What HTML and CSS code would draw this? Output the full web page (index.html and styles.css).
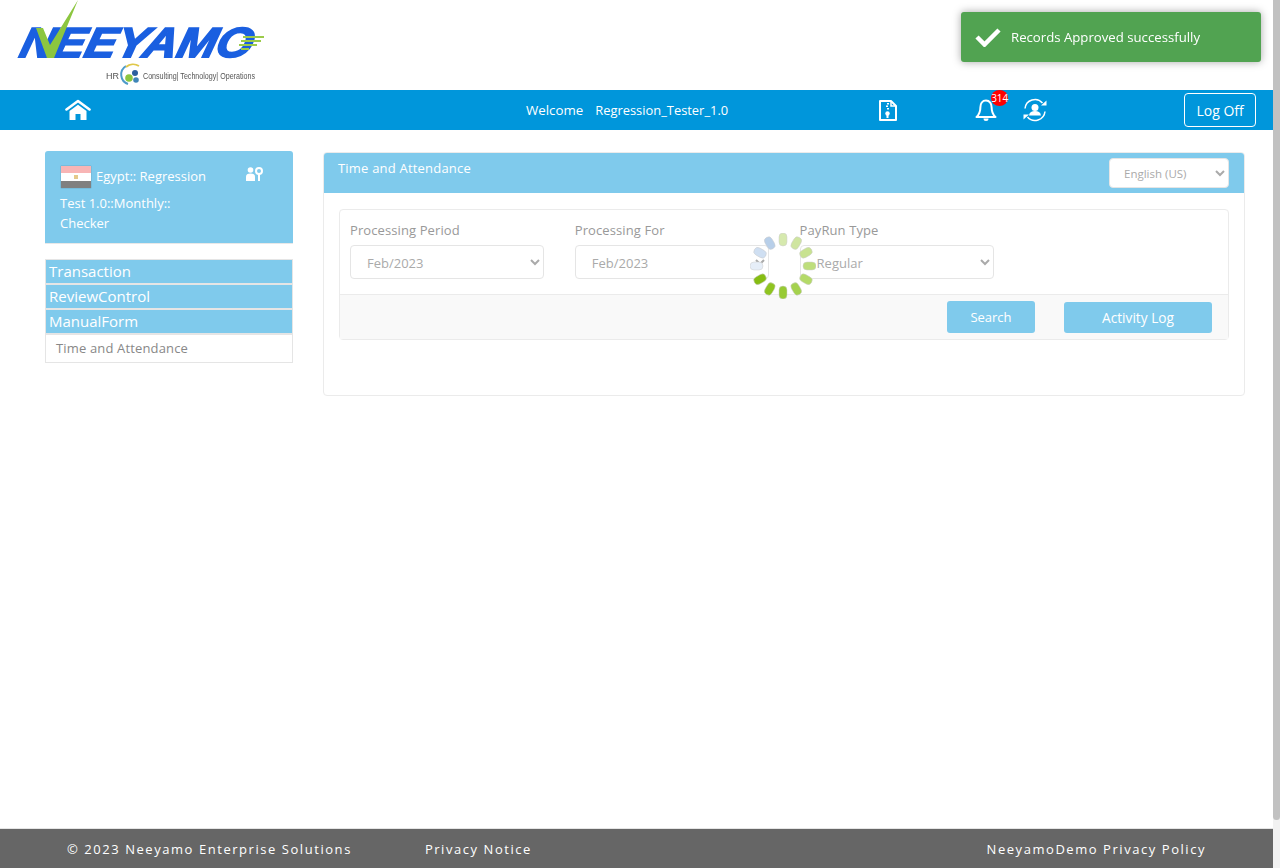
FILE: index.html
```html
<!DOCTYPE html>
<html lang="en">
<head>
  <meta charset="UTF-8">
  <meta name="viewport" content="width=device-width, initial-scale=1.0">
  <title>Time and Attendance</title>
  <link rel="stylesheet" href="styles.css">
</head>
<body>
  <div class="page">
    <!-- Logo -->
    <header class="top-header">
      <svg class="logo" width="300" height="90" viewBox="0 0 300 90">
        <text x="18" y="57" class="logo-name" textLength="232" lengthAdjust="spacingAndGlyphs" transform="skewX(-14) translate(14.200 0)">NEEYAMO</text>
        <polygon points="36,28 43,28 50,45 78,0 54,58 47,58" fill="#8cc63f"/>
        <path d="M243 37h21M241 41h20M239 45h18M241 49h8" stroke="#9ccb4a" stroke-width="2.200"/>
        <text x="106" y="79" class="logo-tag">HR</text>
        <path d="M126 66a10 10 0 0 0 2 18" stroke="#4d9bc9" stroke-width="2" fill="none"/>
        <path d="M126 67a11 11 0 0 1 13 -1" stroke="#e0c84a" stroke-width="1.800" fill="none"/>
        <circle cx="129" cy="78" r="3.800" fill="#8cc63f"/>
        <circle cx="135" cy="73" r="3" fill="#2b5f9e"/>
        <circle cx="136" cy="80" r="2.800" fill="#3f86b8"/>
        <text x="143" y="79" class="logo-tag" textLength="112" lengthAdjust="spacingAndGlyphs">Consulting| Technology| Operations</text>
      </svg>
    </header>

    <!-- Blue nav bar -->
    <nav class="nav-bar">
      <svg class="icon-home" width="26" height="22" viewBox="0 0 26 22">
        <path d="M1.500 10.500 13 2l11.500 8.500" fill="none" stroke="#fff" stroke-width="2.600" stroke-linecap="round" stroke-linejoin="round"/>
        <path d="M4.500 12 13 5.800 21.500 12v9h-6v-6h-5v6h-6z" fill="#fff"/>
      </svg>
      <span class="welcome">Welcome</span>
      <span class="username">Regression_Tester_1.0</span>
      <svg class="icon-file" width="18" height="21" viewBox="0 0 18 21">
        <path d="M1 1h11l5 5v14H1z" fill="none" stroke="#fff" stroke-width="2" stroke-linejoin="round"/>
        <path d="M12 1v5h5" fill="none" stroke="#fff" stroke-width="1.500"/>
        <path d="M8 3h2v1.500H8zM7 5.500h2V7H7zM8 8h2v1.500H8z" fill="#fff"/>
        <circle cx="8.500" cy="13.500" r="2.200" fill="#fff"/>
        <rect x="7.500" y="13.500" width="2" height="4.500" fill="#fff"/>
      </svg>
      <div class="bell-wrap">
        <svg width="24" height="24" viewBox="0 0 24 24">
          <path d="M12 2.500c-3.800 0-5.600 3.300-5.600 6.700 0 4.500-1.200 7.300-3.900 9.800h19c-2.700-2.500-3.900-5.300-3.900-9.800 0-3.400-1.800-6.700-5.600-6.700z" fill="none" stroke="#fff" stroke-width="2" stroke-linejoin="round"/>
          <path d="M9.500 20.500a2.500 2.500 0 0 0 5 0z" fill="#fff"/>
        </svg>
        <span class="badge">314</span>
      </div>
      <svg class="icon-user" width="24" height="24" viewBox="0 0 24 24">
        <path d="M2 10.500A10 10 0 0 1 19.500 5M22 13.500A10 10 0 0 1 4.500 19" fill="none" stroke="#fff" stroke-width="1.500"/>
        <path d="M18 7.500h5.500V2.500zM6 16.500H.5v5z" fill="#fff"/>
        <circle cx="12" cy="9.500" r="3.500" fill="#fff"/>
        <path d="M6 17.500c.5-3.200 2.800-4.400 6-4.400s5.500 1.200 6 4.400z" fill="#fff"/>
      </svg>
      <button class="logoff">Log Off</button>
    </nav>

    <div class="content">
      <aside class="sidebar">
        <div class="country-card">
          <div class="country-row">
            <div class="flag"><span class="flag-dot"></span></div>
            <span>Egypt:: Regression</span>
            <svg class="icon-keys" width="17" height="15" viewBox="0 0 17 15">
              <circle cx="4.500" cy="3" r="2.800" fill="#fff"/>
              <path d="M0 14V9.500C0 7.500 1.500 6.500 4.500 6.500S9 7.500 9 9.500V14z" fill="#fff"/>
              <circle cx="13" cy="4" r="3" fill="none" stroke="#fff" stroke-width="2"/>
              <path d="M12 7h2v7h-2z" fill="#fff"/>
            </svg>
          </div>
          <div class="country-line">Test 1.0::Monthly::</div>
          <div class="country-line">Checker</div>
        </div>

        <div class="menu">
          <div class="menu-head">Transaction</div>
          <div class="menu-head">ReviewControl</div>
          <div class="menu-head">ManualForm</div>
          <div class="menu-item">Time and Attendance</div>
        </div>
      </aside>

      <main class="panel">
        <div class="panel-head">
          <span class="panel-title">Time and Attendance</span>
          <select class="lang-select"><option>English (US)</option></select>
        </div>
        <div class="panel-body">
          <div class="filter-box">
            <div class="filter-row">
              <div class="field">
                <label>Processing Period</label>
                <select><option>Feb/2023</option></select>
              </div>
              <div class="field">
                <label>Processing For</label>
                <select><option>Feb/2023</option></select>
              </div>
              <div class="field">
                <label>PayRun Type</label>
                <select><option>Regular</option></select>
              </div>
            </div>
            <div class="filter-actions">
              <button class="btn btn-search">Search</button>
              <button class="btn btn-log">Activity Log</button>
            </div>
          </div>
        </div>
      </main>
    </div>

    <footer class="footer">
      <span>&copy; 2023 Neeyamo Enterprise Solutions</span>
      <span class="footer-privacy">Privacy Notice</span>
      <span class="footer-right">NeeyamoDemo Privacy Policy</span>
    </footer>
  </div>

  <!-- Fake scrollbar -->
  <div class="scrollbar"><div class="scroll-thumb"></div></div>

  <!-- Toast -->
  <div class="toast">
    <svg width="26" height="20" viewBox="0 0 26 20">
      <path d="M2 10 9.500 17.500 24 3" fill="none" stroke="#fff" stroke-width="4.500"/>
    </svg>
    <span>Records Approved successfully</span>
  </div>

  <!-- Loading spinner -->
  <svg class="spinner" width="66" height="66" viewBox="-33 -33 66 66">
    <rect x="-4" y="-33" width="8" height="13" rx="4" fill="#d6e9ae" stroke="#ccc" stroke-width=".5"/>
    <rect x="-4" y="-33" width="8" height="13" rx="4" fill="#cfe5a0" stroke="#ccc" stroke-width=".5" transform="rotate(30)"/>
    <rect x="-4" y="-33" width="8" height="13" rx="4" fill="#c8e290" stroke="#ccc" stroke-width=".5" transform="rotate(60)"/>
    <rect x="-4" y="-33" width="8" height="13" rx="4" fill="#bede7c" stroke="#ccc" stroke-width=".5" transform="rotate(90)"/>
    <rect x="-4" y="-33" width="8" height="13" rx="4" fill="#b4da68" stroke="#ccc" stroke-width=".5" transform="rotate(120)"/>
    <rect x="-4" y="-33" width="8" height="13" rx="4" fill="#a5d24e" stroke="#ccc" stroke-width=".5" transform="rotate(150)"/>
    <rect x="-4" y="-33" width="8" height="13" rx="4" fill="#97ca34" stroke="#ccc" stroke-width=".5" transform="rotate(180)"/>
    <rect x="-4" y="-33" width="8" height="13" rx="4" fill="#8fc420" stroke="#ccc" stroke-width=".5" transform="rotate(210)"/>
    <rect x="-4" y="-33" width="8" height="13" rx="4" fill="#86bd12" stroke="#ccc" stroke-width=".5" transform="rotate(240)"/>
    <rect x="-4" y="-33" width="8" height="13" rx="4" fill="#e6eef8" stroke="#ccc" stroke-width=".5" transform="rotate(270)"/>
    <rect x="-4" y="-33" width="8" height="13" rx="4" fill="#cfdff2" stroke="#ccc" stroke-width=".5" transform="rotate(300)"/>
    <rect x="-4" y="-33" width="8" height="13" rx="4" fill="#b8cfe9" stroke="#ccc" stroke-width=".5" transform="rotate(330)"/>
  </svg>
</body>
</html>
```

FILE: styles.css
```css
body {
  font-family: "Open Sans", "Noto Sans", sans-serif;
  margin: 0;
  height: 868px;
  display: flex;
  overflow: hidden;
  background-color: #fff;
}

.page {
  width: 1273px;
  height: 868px;
  display: flex;
  flex-direction: column;
}

/* Logo */
.top-header {
  height: 90px;
  flex-shrink: 0;
}

.logo {
  display: block;
  filter: blur(0.4px);
}

.logo-name {
  font-family: "Liberation Sans", sans-serif;
  font-size: 42px;
  font-weight: bold;
  font-style: italic;
  fill: #1a5fe0;
  stroke: #1a5fe0;
  stroke-width: 1.8px;
}

.logo-tag {
  font-family: "Liberation Sans", sans-serif;
  font-size: 9px;
  fill: #555;
}

/* Nav bar */
.nav-bar {
  height: 40px;
  flex-shrink: 0;
  background-color: #0096db;
  display: flex;
  align-items: center;
  color: #fff;
  font-size: 13.3px;
}

.icon-home {
  margin-left: 65px;
}

.welcome {
  margin-left: 435px;
}

.username {
  margin-left: 12px;
  font-size: 12.9px;
}

.icon-file {
  margin-left: 151px;
}

.bell-wrap {
  position: relative;
  margin-left: 77px;
  height: 24px;
}

.badge {
  position: absolute;
  top: -8px;
  left: 17px;
  width: 17px;
  height: 16px;
  line-height: 16px;
  border-radius: 50%;
  background-color: #f00;
  color: #fff;
  font-size: 10px;
  text-align: center;
}

.icon-user {
  margin-left: 25px;
}

.logoff {
  margin-left: 137px;
  width: 72px;
  height: 34px;
  background-color: #0096db;
  border: 1px solid #fff;
  border-radius: 4px;
  color: #fff;
  font-family: inherit;
  font-size: 14px;
  padding: 0;
}

/* Main area */
.content {
  flex: 1;
  display: flex;
  align-items: flex-start;
  gap: 30px;
  padding: 21px 0 0 45px;
}

.sidebar {
  width: 248px;
  flex-shrink: 0;
}

.country-card {
  background-color: #7fcaec;
  color: #fff;
  font-size: 13px;
  height: 93px;
  padding: 14px 15px 0;
  box-sizing: border-box;
  border-radius: 3px 3px 0 0;
  border-bottom: 1px solid #e8e8e8;
}

.country-row {
  display: flex;
  align-items: center;
  gap: 5px;
  height: 24px;
  margin: 0 0 4px 1px;
}

.country-row span:nth-child(2) {
  position: relative;
  top: -1px;
}

.flag {
  width: 30px;
  height: 22px;
  background: linear-gradient(to bottom, #f8b5b5 0 33%, #fff 33% 66%, #808080 66%);
  position: relative;
  box-shadow: 0 0 1px rgba(0, 0, 0, 0.4);
}

.flag-dot {
  position: absolute;
  left: 13px;
  top: 9px;
  width: 4px;
  height: 4px;
  background-color: #e5c98a;
}

.icon-keys {
  margin-left: 35px;
  margin-top: -6px;
}

.country-line {
  line-height: 20px;
}

.menu {
  margin-top: 15px;
  border: 1px solid #e5e5e5;
}

.menu-head {
  background-color: #7fcaec;
  color: #fff;
  font-size: 15px;
  height: 23px;
  line-height: 23px;
  padding-left: 3px;
  border-bottom: 2px solid #e5e5e5;
}

.menu-item {
  height: 27px;
  line-height: 27px;
  padding-left: 10px;
  font-size: 13px;
  letter-spacing: 0.15px;
  color: #888;
  background-color: #fff;
}

/* Panel */
.panel {
  width: 922px;
  height: 244px;
  margin-top: 1px;
  box-sizing: border-box;
  border: 1px solid #ebebeb;
  border-radius: 4px;
}

.panel-head {
  height: 40px;
  background-color: #7fcaec;
  display: flex;
  justify-content: space-between;
  padding: 5px 15px 0 14px;
  box-sizing: border-box;
  border-radius: 3px 3px 0 0;
}

.panel-title {
  color: #fff;
  font-size: 13px;
  line-height: 20px;
  letter-spacing: 0.2px;
}

select {
  font-family: inherit;
  font-size: 13px;
  color: #aaa;
  background-color: #fff;
  border: 1px solid #e5e5e5;
  border-radius: 4px;
  padding: 1px 12px 0;
}

.lang-select {
  width: 120px;
  height: 30px;
  font-size: 11.5px;
  padding: 0 10px;
}

.panel-body {
  padding: 16px 15px 0;
}

.filter-box {
  border: 1px solid #ebebeb;
  border-radius: 4px;
}

.filter-row {
  display: flex;
  gap: 30.4px;
  height: 85px;
  padding: 10px 10px 0;
  box-sizing: border-box;
  border-bottom: 1px solid #ebebeb;
}

.field {
  display: flex;
  flex-direction: column;
  width: 194.4px;
}

.field label {
  font-size: 13px;
  letter-spacing: 0.1px;
  color: #999;
  line-height: 20px;
  margin-bottom: 5px;
}

.field select {
  height: 34px;
}

.filter-actions {
  height: 44px;
  background-color: #f9f9f9;
  display: flex;
  align-items: flex-end;
  padding: 0 16px 6px 0;
  box-sizing: border-box;
  justify-content: flex-end;
  gap: 29px;
}

.btn {
  background-color: #7fcaec;
  color: #fff;
  border: none;
  border-radius: 3px;
  font-family: inherit;
  font-size: 13px;
  padding: 0;
}

.btn-search {
  width: 88px;
  height: 32px;
}

.btn-log {
  width: 148px;
  height: 31px;
  font-size: 13.7px;
}

/* Footer */
.footer {
  height: 40px;
  flex-shrink: 0;
  background-color: #666;
  border-top: 1px solid #e5e5e5;
  box-sizing: border-box;
  color: #fff;
  display: flex;
  align-items: center;
  padding: 0 67px;
  font-size: 13px;
  letter-spacing: 1.55px;
}

.footer-privacy {
  margin-left: 73px;
}

.footer-right {
  margin-left: auto;
}

.scrollbar {
  width: 7px;
  height: 868px;
  background-color: #f1f1f1;
}

.scroll-thumb {
  height: 820px;
  background-color: #c1c1c1;
  border-radius: 0 0 4px 4px;
}

/* Toast on top of the header */
.toast {
  position: fixed;
  top: 12px;
  left: 961px;
  width: 300px;
  height: 50px;
  box-sizing: border-box;
  padding-left: 14px;
  background-color: #51a351;
  color: #fff;
  font-size: 13.2px;
  display: flex;
  align-items: center;
  gap: 10px;
  border-radius: 3px;
  box-shadow: 0 0 8px rgba(0, 0, 0, 0.35);
}

.spinner {
  position: fixed;
  left: 750px;
  top: 233px;
}
```
